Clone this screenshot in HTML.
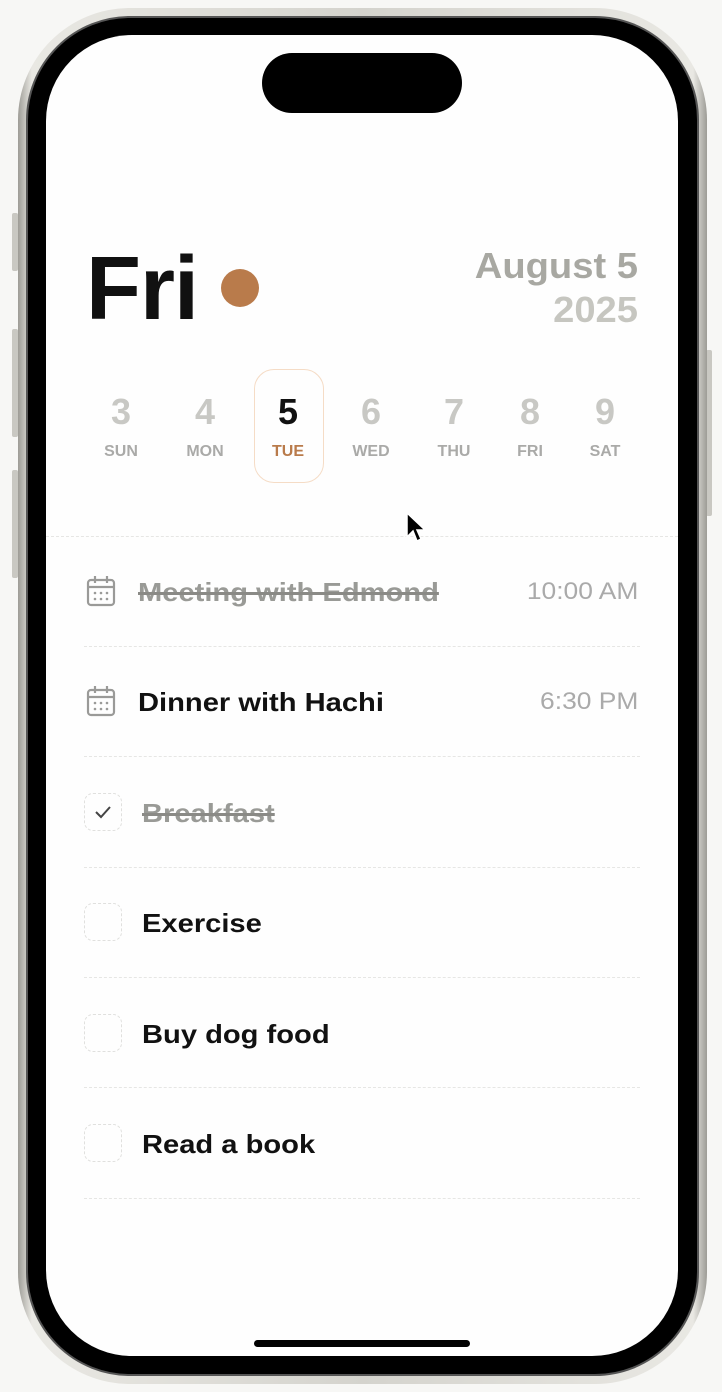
<!DOCTYPE html>
<html><head><meta charset="utf-8"><style>
*{margin:0;padding:0;box-sizing:border-box}
body{width:722px;height:1392px;background:#f7f7f5;position:relative;overflow:hidden;font-family:"Liberation Sans",sans-serif}
.frame{position:absolute;left:18px;top:8px;width:689px;height:1376px;border-radius:112px;background:linear-gradient(90deg,#9d9c96,#e9e8e3 2%,#d4d3cd 50%,#e9e8e3 98%,#9d9c96);}
.bezel{position:absolute;left:26px;top:16px;width:673px;height:1360px;border-radius:104px;background:#000;border:2px solid #555}
.screen{position:absolute;left:46px;top:35px;width:632px;height:1321px;border-radius:86px;background:#fefefe;overflow:hidden}
.btn{position:absolute;background:#c9c8c2;border-radius:2px}
.island{position:absolute;left:216px;top:18px;width:200px;height:60px;border-radius:30px;background:#000}
.home{position:absolute;left:208px;top:1305px;width:216px;height:7px;border-radius:4px;background:#000}
.fri{position:absolute;left:40px;top:202px;font-size:90px;font-weight:bold;color:#111;letter-spacing:-1px;line-height:104px}
.dot{position:absolute;left:175px;top:234px;width:38px;height:38px;border-radius:50%;background:#b97b4b}
.date{position:absolute;right:40px;top:209px;text-align:right;font-weight:bold;font-size:36px;line-height:44px;transform:scaleX(1.06);transform-origin:right}
.days .d{position:absolute;width:70px;text-align:center;top:355px}
.d .n{font-size:36px;font-weight:bold;color:#c8c8c4;line-height:44px;position:absolute;top:0;width:70px}
.d .l{font-size:16px;font-weight:bold;color:#aaaaa8;position:absolute;top:53px;width:70px}
.sel{position:absolute;left:208px;top:334px;width:70px;height:114px;border:1px solid #f5dcc6;border-radius:20px}
.hr{position:absolute;border-top:1px dashed #e6e6e4}
.row{position:absolute;left:38px;width:556px;height:40px}
.t{position:absolute;left:54px;font-size:26px;font-weight:bold;color:#111;top:6px;transform:scaleX(1.12);transform-origin:left;white-space:nowrap}
.t.s{color:#999a96;text-decoration:line-through;text-decoration-thickness:3px;text-decoration-color:#8a8a86}
.tm{position:absolute;right:2px;top:7px;font-size:24px;color:#aaa;transform:scaleX(1.1);transform-origin:right}
.cb{position:absolute;left:0;top:1px;width:38px;height:38px;border:1px dashed #e0e0de;border-radius:9px}
.ico{position:absolute;left:2px;top:4px}
</style></head><body>
<div class="btn" style="left:12px;top:213px;width:6px;height:58px"></div>
<div class="btn" style="left:12px;top:329px;width:6px;height:108px"></div>
<div class="btn" style="left:12px;top:470px;width:6px;height:108px"></div>
<div class="btn" style="left:706px;top:350px;width:6px;height:166px"></div>
<div class="frame"></div>
<div class="bezel"></div>
<div class="screen">
<div class="island"></div>
<div class="fri">Fri</div>
<div class="dot"></div>
<div class="date"><div style="color:#a8a8a2">August 5</div><div style="color:#c6c6c0">2025</div></div>
<div class="sel"></div>
<div class="days">
<div class="d" style="left:40px"><div class="n">3</div><div class="l">SUN</div></div>
<div class="d" style="left:124px"><div class="n">4</div><div class="l">MON</div></div>
<div class="d" style="left:207px"><div class="n" style="color:#111">5</div><div class="l" style="color:#b97b4b">TUE</div></div>
<div class="d" style="left:290px"><div class="n">6</div><div class="l">WED</div></div>
<div class="d" style="left:373px"><div class="n">7</div><div class="l">THU</div></div>
<div class="d" style="left:449px"><div class="n">8</div><div class="l">FRI</div></div>
<div class="d" style="left:524px"><div class="n">9</div><div class="l">SAT</div></div>
</div>
<div class="hr" style="left:0;width:632px;top:501px"></div>
<div class="row" style="top:536px">
<svg class="ico" width="30" height="32" viewBox="0 0 30 32" fill="none" stroke="#9a9a98" stroke-width="2.2"><rect x="2" y="5" width="26" height="25" rx="3"/><path d="M2 12H28M9 1V8M21 1V8"/><g fill="#9a9a98" stroke="none"><circle cx="9" cy="18" r="1.3"/><circle cx="15" cy="18" r="1.3"/><circle cx="21" cy="18" r="1.3"/><circle cx="9" cy="24" r="1.3"/><circle cx="15" cy="24" r="1.3"/><circle cx="21" cy="24" r="1.3"/></g></svg>
<div class="t s">Meeting with Edmond</div><div class="tm">10:00 AM</div></div>
<div class="hr" style="left:38px;width:556px;top:611px"></div>
<div class="row" style="top:646px">
<svg class="ico" width="30" height="32" viewBox="0 0 30 32" fill="none" stroke="#9a9a98" stroke-width="2.2"><rect x="2" y="5" width="26" height="25" rx="3"/><path d="M2 12H28M9 1V8M21 1V8"/><g fill="#9a9a98" stroke="none"><circle cx="9" cy="18" r="1.3"/><circle cx="15" cy="18" r="1.3"/><circle cx="21" cy="18" r="1.3"/><circle cx="9" cy="24" r="1.3"/><circle cx="15" cy="24" r="1.3"/><circle cx="21" cy="24" r="1.3"/></g></svg>
<div class="t">Dinner with Hachi</div><div class="tm">6:30 PM</div></div>
<div class="hr" style="left:38px;width:556px;top:721px"></div>
<div class="row" style="top:757px"><div class="cb"><svg width="38" height="38" viewBox="0 0 38 38" style="position:absolute;left:-1px;top:-1px"><path d="M12 19L17 24L26 14" fill="none" stroke="#444" stroke-width="2"/></svg></div><div class="t s" style="left:58px">Breakfast</div></div>
<div class="hr" style="left:38px;width:556px;top:832px"></div>
<div class="row" style="top:867px"><div class="cb"></div><div class="t" style="left:58px">Exercise</div></div>
<div class="hr" style="left:38px;width:556px;top:942px"></div>
<div class="row" style="top:978px"><div class="cb"></div><div class="t" style="left:58px">Buy dog food</div></div>
<div class="hr" style="left:38px;width:556px;top:1052px"></div>
<div class="row" style="top:1088px"><div class="cb"></div><div class="t" style="left:58px">Read a book</div></div>
<div class="hr" style="left:38px;width:556px;top:1163px"></div>
<svg style="position:absolute;left:359px;top:476px" width="22" height="34" viewBox="0 0 22 34"><path d="M2 2V26L8 20L12 30L16 28L12 19H20Z" fill="#000" stroke="#fff" stroke-width="1.5"/></svg>
<div class="home"></div>
</div>
</body></html>
